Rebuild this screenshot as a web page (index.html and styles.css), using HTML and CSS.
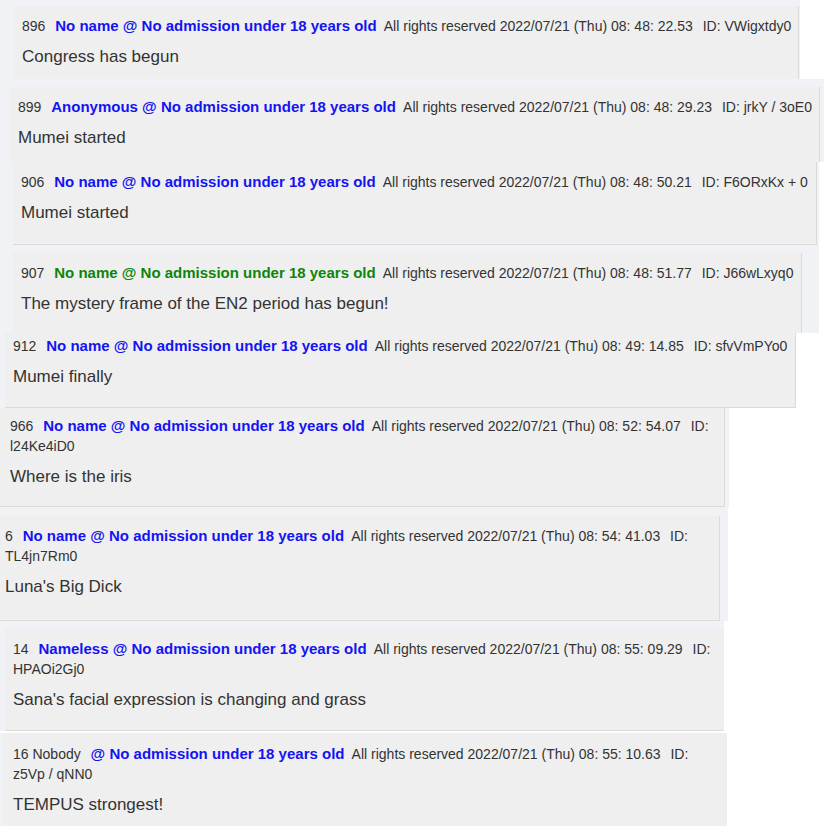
FILE: index.html
```html
<!DOCTYPE html>
<html lang="en">
<head>
    <meta charset="UTF-8">
    <meta name="viewport" content="width=device-width, initial-scale=1.0">
    <title>Thread replies</title>
    <link rel="stylesheet" href="styles.css">
</head>
<body>

    <div class="strip s1">
        <div class="post">
            <div class="post-head one-line"><span class="num">896</span> <span class="name">No name @ No admission under 18 years old</span> <span class="date">All rights reserved 2022/07/21 (Thu) 08: 48: 22.53</span> <span class="uid">ID: VWigxtdy0</span></div>
            <div class="post-body">Congress has begun</div>
        </div>
    </div>

    <div class="strip s2">
        <div class="post">
            <div class="post-head one-line"><span class="num">899</span> <span class="name">Anonymous @ No admission under 18 years old</span> <span class="date">All rights reserved 2022/07/21 (Thu) 08: 48: 29.23</span> <span class="uid">ID: jrkY / 3oE0</span></div>
            <div class="post-body">Mumei started</div>
        </div>
    </div>

    <div class="strip s3">
        <div class="post">
            <div class="post-head one-line"><span class="num">906</span> <span class="name">No name @ No admission under 18 years old</span> <span class="date">All rights reserved 2022/07/21 (Thu) 08: 48: 50.21</span> <span class="uid">ID: F6ORxKx + 0</span></div>
            <div class="post-body">Mumei started</div>
        </div>
    </div>

    <div class="strip s4">
        <div class="post">
            <div class="post-head one-line"><span class="num">907</span> <span class="name green">No name @ No admission under 18 years old</span> <span class="date">All rights reserved 2022/07/21 (Thu) 08: 48: 51.77</span> <span class="uid">ID: J66wLxyq0</span></div>
            <div class="post-body">The mystery frame of the EN2 period has begun!</div>
        </div>
    </div>

    <div class="strip s5">
        <div class="post">
            <div class="post-head one-line"><span class="num">912</span> <span class="name">No name @ No admission under 18 years old</span> <span class="date">All rights reserved 2022/07/21 (Thu) 08: 49: 14.85</span> <span class="uid">ID: sfvVmPYo0</span></div>
            <div class="post-body">Mumei finally</div>
        </div>
    </div>

    <div class="strip s6">
        <div class="post">
            <div class="post-head"><span class="num">966</span> <span class="name">No name @ No admission under 18 years old</span> <span class="date">All rights reserved 2022/07/21 (Thu) 08: 52: 54.07</span> <span class="uid">ID: l24Ke4iD0</span></div>
            <div class="post-body">Where is the iris</div>
        </div>
    </div>

    <div class="strip s7">
        <div class="post">
            <div class="post-head"><span class="num">6</span> <span class="name">No name @ No admission under 18 years old</span> <span class="date">All rights reserved 2022/07/21 (Thu) 08: 54: 41.03</span> <span class="uid">ID: TL4jn7Rm0</span></div>
            <div class="post-body">Luna's Big Dick</div>
        </div>
    </div>

    <div class="strip s8">
        <div class="post">
            <div class="post-head"><span class="num">14</span> <span class="name">Nameless @ No admission under 18 years old</span> <span class="date">All rights reserved 2022/07/21 (Thu) 08: 55: 09.29</span> <span class="uid">ID: HPAOi2Gj0</span></div>
            <div class="post-body">Sana's facial expression is changing and grass</div>
        </div>
    </div>

    <div class="strip s9">
        <div class="post">
            <div class="post-head"><span class="num">16 Nobody</span> <span class="name">@ No admission under 18 years old</span> <span class="date">All rights reserved 2022/07/21 (Thu) 08: 55: 10.63</span> <span class="uid">ID: z5Vp / qNN0</span></div>
            <div class="post-body">TEMPUS strongest!</div>
        </div>
    </div>

</body>
</html>
```

FILE: styles.css
```css
body {
    margin: 0;
    background-color: #fff;
    font-family: "Liberation Sans", Arial, sans-serif;
    color: #333;
}

.strip {
    background-color: #f1f2f6;
    box-sizing: border-box;
    overflow: hidden;
}

.post {
    background-color: #efefef;
    border-right: 1px solid #dadada;
    border-bottom: 1px solid #dadada;
    box-sizing: border-box;
    padding: 10px 4px 0 8px;
}

.post-head {
    font-size: 14px;
    line-height: 20px;
}

.post-head.one-line {
    white-space: nowrap;
}

.num {
    margin-right: 6px;
}

.name {
    font-size: 15px;
    font-weight: bold;
    color: #1414f2;
    margin-right: 4px;
}

.name.green {
    color: #0b860b;
}

.date {
    margin-right: 6px;
}

.post-body {
    font-size: 17px;
    line-height: 21px;
    margin-top: 10px;
}

/* each strip is a separate cut, so offsets differ */
.s1 { width: 800px; height: 79px; padding: 6px 0 0 14px; }
.s1 .post { width: 785px; height: 73px; border-bottom: none; }

.s2 { width: 824px; height: 83px; padding: 8px 0 0 10px; }
.s2 .post { width: 810px; height: 75px; border-bottom: none; }

.s3 { width: 819px; height: 91px; padding-left: 13px; }
.s3 .post { width: 804px; height: 83px; }

.s4 { width: 819px; height: 80px; padding-left: 13px; }
.s4 .post { width: 789px; height: 80px; border-bottom: none; }

.s5 { width: 796px; height: 75px; padding-left: 5px; }
.s5 .post { width: 791px; height: 75px; padding-top: 3px; }

.s6 { width: 729px; height: 99px; }
.s6 .post { width: 725px; height: 99px; padding: 8px 8px 0 10px; }

.s7 { width: 728px; height: 114px; padding-top: 9px; }
.s7 .post { width: 720px; height: 105px; padding-left: 5px; }

.s8 { width: 724px; height: 110px; padding: 8px 0 0 5px; }
.s8 .post { width: 719px; height: 102px; border-right: none; }

.s9 { width: 727px; height: 93px; margin-top: 2px; padding-left: 3px; }
.s9 .post { width: 724px; height: 93px; padding: 11px 8px 0 10px; border: none; }
```
